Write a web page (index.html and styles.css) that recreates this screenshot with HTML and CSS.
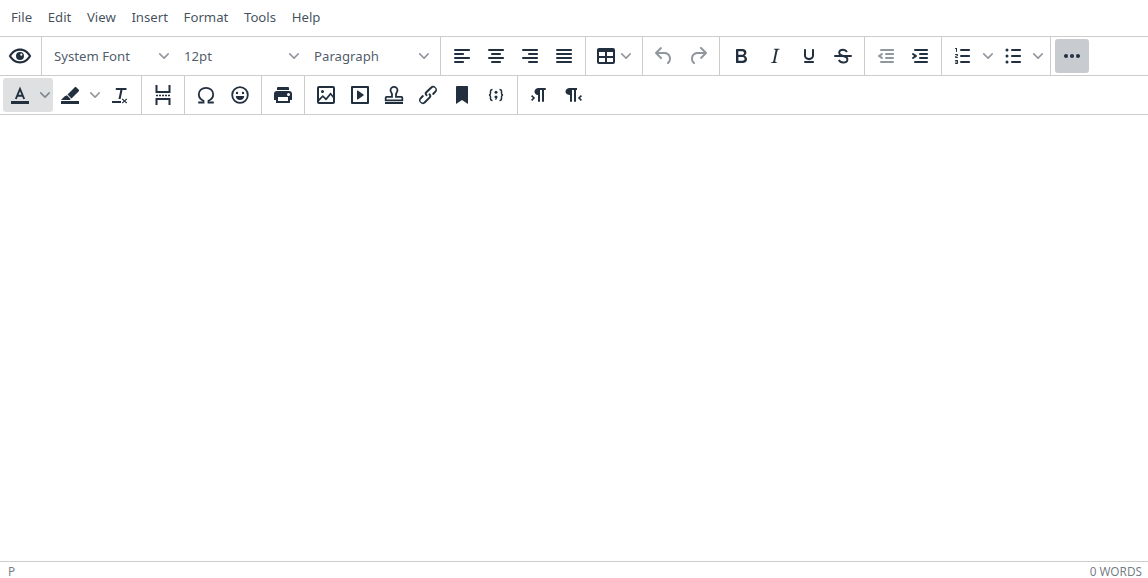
FILE: index.html
```html
<!DOCTYPE html>
<html lang="en">
<head>
    <meta charset="UTF-8">
    <meta name="viewport" content="width=device-width, initial-scale=1.0">
    <title>Editor</title>
    <link rel="stylesheet" href="styles.css">
</head>
<body>
    <svg class="sprite" xmlns="http://www.w3.org/2000/svg">
        <symbol id="i-chevron" viewBox="0 0 10 10"><path d="M8.7 2.2c.3-.3.8-.3 1 0 .4.4.4.9 0 1.2L5.7 7.8c-.3.3-.9.3-1.2 0L.2 3.4a.8.8 0 010-1.2c.3-.3.8-.3 1.1 0L5 6l3.7-3.8z"/></symbol>
        <symbol id="i-preview" viewBox="0 0 24 24"><path fill-rule="evenodd" d="M12 4.600c4.500 0 8.300 2.600 10.800 6.700l.4.700-.4.700c-2.500 4.100-6.300 6.700-10.800 6.700S3.700 16.800 1.200 12.700L.8 12l.4-.7C3.700 7.200 7.500 4.600 12 4.600zm0 2.100c-3.500 0-6.600 1.900-8.800 5.300 2.200 3.400 5.300 5.300 8.800 5.300s6.600-1.900 8.800-5.300c-2.200-3.400-5.300-5.300-8.800-5.300zm0 1.300a4 4 0 110 8 4 4 0 010-8zm1.300 1.600a1.100 1.100 0 100 2.200 1.100 1.100 0 000-2.200z"/></symbol>
        <symbol id="i-align-left" viewBox="0 0 24 24"><path d="M5 5h14c.6 0 1 .4 1 1s-.4 1-1 1H5a1 1 0 110-2zm0 4h8c.6 0 1 .4 1 1s-.4 1-1 1H5a1 1 0 110-2zm0 8h8c.6 0 1 .4 1 1s-.4 1-1 1H5a1 1 0 010-2zm0-4h14c.6 0 1 .4 1 1s-.4 1-1 1H5a1 1 0 010-2z"/></symbol>
        <symbol id="i-align-center" viewBox="0 0 24 24"><path d="M5 5h14c.6 0 1 .4 1 1s-.4 1-1 1H5a1 1 0 110-2zm3 4h8c.6 0 1 .4 1 1s-.4 1-1 1H8a1 1 0 110-2zm0 8h8c.6 0 1 .4 1 1s-.4 1-1 1H8a1 1 0 010-2zm-3-4h14c.6 0 1 .4 1 1s-.4 1-1 1H5a1 1 0 010-2z"/></symbol>
        <symbol id="i-align-right" viewBox="0 0 24 24"><path d="M5 5h14c.6 0 1 .4 1 1s-.4 1-1 1H5a1 1 0 110-2zm6 4h8c.6 0 1 .4 1 1s-.4 1-1 1h-8a1 1 0 010-2zm0 8h8c.6 0 1 .4 1 1s-.4 1-1 1h-8a1 1 0 010-2zm-6-4h14c.6 0 1 .4 1 1s-.4 1-1 1H5a1 1 0 010-2z"/></symbol>
        <symbol id="i-align-justify" viewBox="0 0 24 24"><path d="M5 5h14c.6 0 1 .4 1 1s-.4 1-1 1H5a1 1 0 110-2zm0 4h14c.6 0 1 .4 1 1s-.4 1-1 1H5a1 1 0 110-2zm0 4h14c.6 0 1 .4 1 1s-.4 1-1 1H5a1 1 0 010-2zm0 4h14c.6 0 1 .4 1 1s-.4 1-1 1H5a1 1 0 010-2z"/></symbol>
        <symbol id="i-table" viewBox="0 0 24 24"><path fill-rule="evenodd" d="M19 4a2 2 0 012 2v12a2 2 0 01-2 2H5a2 2 0 01-2-2V6c0-1.100.9-2 2-2h14zM5 14v4h6v-4H5zm14 0h-6v4h6v-4zm0-6h-6v4h6V8zM5 12h6V8H5v4z"/></symbol>
        <symbol id="i-undo" viewBox="0 0 24 24"><path d="M6.400 8H12c3.700 0 6.200 2 6.800 5.100.6 2.700-.4 5.600-2.300 6.800a1 1 0 01-1-1.800c1.100-.7 1.800-2.700 1.400-4.600-.5-2.100-2.100-3.500-4.900-3.500H6.400l3.300 3.300a1 1 0 11-1.400 1.400l-5-5a1 1 0 010-1.400l5-5a1 1 0 011.400 1.400L6.400 8z"/></symbol>
        <symbol id="i-redo" viewBox="0 0 24 24"><path d="M17.600 10H12c-2.800 0-4.400 1.400-4.900 3.500-.4 2 .3 4 1.400 4.600a1 1 0 11-1 1.800c-2-1.200-2.900-4.100-2.300-6.800.6-3 3-5.100 6.800-5.100h5.600l-3.300-3.300a1 1 0 111.400-1.400l5 5a1 1 0 010 1.400l-5 5a1 1 0 01-1.400-1.400l3.300-3.300z"/></symbol>
        <symbol id="i-bold" viewBox="0 0 24 24"><path d="M7.800 19c-.3 0-.5 0-.6-.2l-.2-.5V5.700c0-.2 0-.4.2-.5l.6-.2h5c1.500 0 2.700.3 3.500 1 .7.6 1.100 1.400 1.100 2.500a3 3 0 01-.6 1.900c-.4.6-1 1-1.600 1.200.4.1.9.3 1.300.6s.8.7 1 1.200c.4.4.5 1 .5 1.600 0 1.300-.4 2.300-1.300 3-.8.7-2.100 1-3.800 1H7.800zm5-8.300c.6 0 1.200-.1 1.600-.5.4-.3.6-.7.6-1.300 0-1.100-.8-1.700-2.300-1.700H9.300v3.500h3.500zm.5 6c.7 0 1.300-.1 1.700-.4.4-.4.6-.9.6-1.500s-.2-1-.7-1.400c-.4-.3-1-.4-2-.4H9.400v3.700h3.900z"/></symbol>
        <symbol id="i-italic" viewBox="0 0 24 24"><path d="M16.700 4.700l-.1.900h-.3c-.6 0-1 0-1.400.3-.3.3-.4.6-.5 1.100l-2.100 9.800v.6c0 .5.4.8 1.400.8h.2l-.2.800H8l.2-.8h.2c1.100 0 1.800-.5 2-1.500l2-9.800.1-.5c0-.6-.4-.8-1.400-.8h-.3l.2-.9h5.700z"/></symbol>
        <symbol id="i-underline" viewBox="0 0 24 24"><path d="M16 5c.6 0 1 .4 1 1v5.500a4 4 0 01-.4 1.800l-1 1.400a5.300 5.300 0 01-5.500 1 5 5 0 01-1.600-1c-.5-.4-.8-.9-1.100-1.400a4 4 0 01-.4-1.800V6c0-.6.4-1 1-1s1 .4 1 1v5.500c0 .3 0 .6.2 1l.6.7a3.300 3.300 0 002.200.8 3.400 3.400 0 002.200-.8c.3-.2.4-.5.6-.8l.2-.9V6c0-.6.4-1 1-1zM8 17h8c.6 0 1 .4 1 1s-.4 1-1 1H8a1 1 0 010-2z"/></symbol>
        <symbol id="i-strike" viewBox="0 0 24 24"><path d="M4 11h16a1 1 0 010 2H4a1 1 0 010-2z"/><path class="line" stroke-width="1.900" d="M16 8c-.7-1.300-2-2.300-3.900-2.300-2.500 0-3.900 1.500-3.900 3.100 0 2 2 2.700 3.900 3.200 2.300.5 4.300 1.300 4.300 3.400 0 1.900-1.800 3.100-4.200 3.100-2 0-3.600-1-4.400-2.500"/></symbol>
        <symbol id="i-outdent" viewBox="0 0 24 24"><path d="M7 5h12c.6 0 1 .4 1 1s-.4 1-1 1H7a1 1 0 110-2zm5 4h7c.6 0 1 .4 1 1s-.4 1-1 1h-7a1 1 0 010-2zm0 4h7c.6 0 1 .4 1 1s-.4 1-1 1h-7a1 1 0 010-2zm-5 4h12a1 1 0 010 2H7a1 1 0 010-2zm1.600-3.800a1 1 0 01-1.200 1.600l-3-2a1 1 0 010-1.600l3-2a1 1 0 011.200 1.600L6.800 12l1.800 1.200z"/></symbol>
        <symbol id="i-indent" viewBox="0 0 24 24"><path d="M7 5h12c.6 0 1 .4 1 1s-.4 1-1 1H7a1 1 0 110-2zm5 4h7c.6 0 1 .4 1 1s-.4 1-1 1h-7a1 1 0 010-2zm0 4h7c.6 0 1 .4 1 1s-.4 1-1 1h-7a1 1 0 010-2zm-5 4h12a1 1 0 010 2H7a1 1 0 010-2zm-2.600-3.800L6.200 12l-1.800-1.200a1 1 0 011.200-1.600l3 2a1 1 0 010 1.600l-3 2a1 1 0 11-1.200-1.600z"/></symbol>
        <symbol id="i-numlist" viewBox="0 0 24 24"><path d="M10 17h8c.6 0 1 .4 1 1s-.4 1-1 1h-8a1 1 0 010-2zm0-6h8c.6 0 1 .4 1 1s-.4 1-1 1h-8a1 1 0 010-2zm0-6h8c.6 0 1 .4 1 1s-.4 1-1 1h-8a1 1 0 110-2zM6 4v3.500c0 .3-.2.5-.5.5a.5.5 0 01-.5-.5V5h-.5a.5.5 0 010-1H6zm-1 8.800l.2.2h1.300c.3 0 .5.2.5.5s-.2.5-.5.5H4.900a1 1 0 01-.9-1V13c0-.4.3-.8.6-1l1.200-.4.2-.3a.2.2 0 00-.2-.2H4.500a.5.5 0 01-.5-.5c0-.3.2-.5.5-.5h1.600c.5 0 .9.4.9 1v.1c0 .4-.3.8-.6 1l-1.200.4-.2.200zM7 17v2c0 .6-.4 1-1 1H4.500a.5.5 0 010-1h1.200c.2 0 .3-.1.3-.3 0-.2-.1-.3-.3-.3H4.400a.4.4 0 110-.8h1.300c.2 0 .3-.1.3-.3 0-.2-.1-.3-.3-.3H4.500a.5.5 0 110-1H6c.6 0 1 .4 1 1z"/></symbol>
        <symbol id="i-bullist" viewBox="0 0 24 24"><path d="M11 5h8c.6 0 1 .4 1 1s-.4 1-1 1h-8a1 1 0 010-2zm0 6h8c.6 0 1 .4 1 1s-.4 1-1 1h-8a1 1 0 010-2zm0 6h8c.6 0 1 .4 1 1s-.4 1-1 1h-8a1 1 0 010-2z"/><circle cx="6" cy="6" r="1.500"/><circle cx="6" cy="12" r="1.500"/><circle cx="6" cy="18" r="1.500"/></symbol>
        <symbol id="i-more" viewBox="0 0 24 24"><circle cx="6" cy="12" r="2"/><circle cx="12" cy="12" r="2"/><circle cx="18" cy="12" r="2"/></symbol>
        <symbol id="i-forecolor" viewBox="0 0 24 24"><path class="line" stroke-width="1.900" d="M7.800 16l4.200-10 4.200 10M9.300 12.800h5.400"/><path d="M3 18h18v3H3z"/></symbol>
        <symbol id="i-highlight" viewBox="0 0 24 24"><path d="M3 18h18v3H3z"/><path d="M16.800 4.200a1 1 0 011.400 0l2.600 2.600a1 1 0 010 1.400l-7.300 7.300-4-4zM8.900 12.300l3.800 3.800-.9.900H3l3.400-3.400z"/></symbol>
        <symbol id="i-removeformat" viewBox="0 0 24 24"><path d="M8 5h10.500v2h-4L12.600 16h-2.100l1.900-9H7.600zM4 18h9v2H4zM14.600 15.600l1.900 1.600 1.800-1.600.8.800-1.800 1.600 1.800 1.600-.8.800-1.800-1.600-1.900 1.600-.7-.8 1.800-1.600-1.800-1.600z"/></symbol>
        <symbol id="i-pagebreak" viewBox="0 0 24 24"><path class="line" stroke-width="2" d="M5.500 2v7h13V2M5.500 22v-6h13v6"/><path d="M5 11.800h2v1.400H5zm3 0h2v1.400H8zm3 0h2v1.400h-2zm3 0h2v1.400h-2zm3 0h2v1.400h-2z"/></symbol>
        <symbol id="i-charmap" viewBox="0 0 24 24"><path class="line" stroke-width="1.800" d="M4.200 19.500h5.300v-1.700C6.500 16.400 4.800 14 4.800 11.200 4.800 7.400 8 4.900 12 4.900s7.200 2.500 7.200 6.300c0 2.800-1.700 5.200-4.700 6.600v1.700h5.300"/></symbol>
        <symbol id="i-emoji" viewBox="0 0 24 24"><circle class="line" stroke-width="1.800" cx="12" cy="12" r="7.800"/><circle cx="9" cy="10" r="1.200"/><circle cx="15" cy="10" r="1.200"/><path d="M7.800 13h8.400c0 2.400-1.900 4-4.200 4s-4.200-1.600-4.200-4z"/></symbol>
        <symbol id="i-print" viewBox="0 0 24 24"><path fill-rule="evenodd" d="M18 8H6a3 3 0 00-3 3v6h2v3h14v-3h2v-6a3 3 0 00-3-3zm-1 10H7v-4h10v4zm.5-5a1.500 1.500 0 110-3 1.500 1.500 0 010 3zM18 5a1 1 0 00-1-1H7a1 1 0 00-1 1v2h12V5z"/></symbol>
        <symbol id="i-image" viewBox="0 0 24 24"><path fill-rule="evenodd" d="M5 15.700l3.300-3.200c.3-.3.700-.3 1 0L12 15l4.100-5c.3-.4.800-.4 1 0l1.900 2.600V5H5v10.700zM5 18.300V19h14v-3.900l-2.400-3-4 4.900c-.3.400-.8.400-1.100 0l-2.700-2.700L5 18.300zM19 3a2 2 0 012 2v14a2 2 0 01-2 2H5a2 2 0 01-2-2V5c0-1.100.9-2 2-2h14zM8.500 7a1.500 1.500 0 110 3 1.500 1.500 0 010-3z"/></symbol>
        <symbol id="i-media" viewBox="0 0 24 24"><path fill-rule="evenodd" d="M4 3h16a1 1 0 011 1v16a1 1 0 01-1 1H4a1 1 0 01-1-1V4a1 1 0 011-1zm1 2v14h14V5H5zm4.800 2.600l5.700 4a.5.500 0 010 .8l-5.700 4a.5.500 0 01-.8-.4V8c0-.4.500-.6.800-.4z"/></symbol>
        <symbol id="i-template" viewBox="0 0 24 24"><path class="line" stroke-width="1.800" d="M12 3.800a3.500 3.500 0 00-3.500 3.500c0 1.700 1.500 2.500 1.500 4.200v2.400H4.500a.8.8 0 00-.8.800v2.600h16.600v-2.600a.8.8 0 00-.8-.8H14v-2.400c0-1.700 1.500-2.500 1.500-4.200A3.500 3.500 0 0012 3.800z"/><path d="M3 19h18v2H3z"/></symbol>
        <symbol id="i-link" viewBox="0 0 24 24"><path d="M6.200 12.300a1 1 0 011.400 1.400l-2 2a2 2 0 102.600 2.800l4.800-4.800a1 1 0 000-1.400 1 1 0 111.400-1.300 2.900 2.900 0 010 4L9.600 20a3.900 3.900 0 01-5.500-5.500l2-2.200zm11.600-.6a1 1 0 01-1.400-1.400l2-2a2 2 0 10-2.600-2.800L11 9.900a1 1 0 000 1.400 1 1 0 11-1.400 1.300 2.900 2.900 0 010-4L14.400 4a3.900 3.900 0 015.500 5.500l-2.100 2.200z"/></symbol>
        <symbol id="i-bookmark" viewBox="0 0 24 24"><path d="M6 4v17l6-4 6 4V4c0-.6-.4-1-1-1H7a1 1 0 00-1 1z"/></symbol>
        <symbol id="i-code" viewBox="0 0 24 24"><path class="line" stroke-width="1.500" d="M8.500 6.500c-1.500 0-2 .6-2 2v1.700c0 1-.5 1.700-1.500 1.800 1 .1 1.500.8 1.500 1.800v1.700c0 1.400.5 2 2 2M15.500 6.500c1.500 0 2 .6 2 2v1.700c0 1 .5 1.700 1.500 1.800-1 .1-1.500.8-1.500 1.800v1.700c0 1.400-.5 2-2 2"/><circle cx="12" cy="9.300" r="1.500"/><path d="M10.600 12.800h2.800v2l-1.400 2.200-.9-.5.5-1.500h-1z"/></symbol>
        <symbol id="i-ltr" viewBox="0 0 24 24"><path d="M11 5h7a1 1 0 010 2h-1v11a1 1 0 01-2 0V7h-2v11a1 1 0 01-2 0v-6c-.5 0-1 0-1.400-.3A3.400 3.400 0 017.800 10a3.300 3.300 0 010-2.800 3.400 3.400 0 011.800-1.800L11 5z"/><path class="line" stroke-width="1.600" d="M4.600 12.600L7 15l-2.400 2.400"/></symbol>
        <symbol id="i-rtl" viewBox="0 0 24 24"><path d="M8 5h8v2h-1v11a1 1 0 01-2 0V7h-2v11a1 1 0 01-2 0v-6c-.5 0-1 0-1.400-.3A3.400 3.400 0 014.800 10a3.300 3.300 0 010-2.800 3.400 3.400 0 011.800-1.800L8 5z"/><path class="line" stroke-width="1.600" d="M20.400 12.600L18 15l2.400 2.400"/></symbol>
    </svg>

    <div class="editor">
        <div class="menubar">
            <button class="menu-item">File</button>
            <button class="menu-item">Edit</button>
            <button class="menu-item">View</button>
            <button class="menu-item">Insert</button>
            <button class="menu-item">Format</button>
            <button class="menu-item">Tools</button>
            <button class="menu-item">Help</button>
        </div>

        <div class="toolbar">
            <div class="group first">
                <button class="btn"><svg class="icon"><use href="#i-preview"/></svg></button>
            </div>
            <div class="group">
                <button class="select"><span class="select-label">System Font</span><svg class="chevron"><use href="#i-chevron"/></svg></button>
                <button class="select"><span class="select-label">12pt</span><svg class="chevron"><use href="#i-chevron"/></svg></button>
                <button class="select"><span class="select-label">Paragraph</span><svg class="chevron"><use href="#i-chevron"/></svg></button>
            </div>
            <div class="group">
                <button class="btn"><svg class="icon"><use href="#i-align-left"/></svg></button>
                <button class="btn"><svg class="icon"><use href="#i-align-center"/></svg></button>
                <button class="btn"><svg class="icon"><use href="#i-align-right"/></svg></button>
                <button class="btn"><svg class="icon"><use href="#i-align-justify"/></svg></button>
            </div>
            <div class="group">
                <button class="menu-btn"><svg class="icon"><use href="#i-table"/></svg><span class="caret"><svg class="chevron"><use href="#i-chevron"/></svg></span></button>
            </div>
            <div class="group">
                <button class="btn disabled"><svg class="icon"><use href="#i-undo"/></svg></button>
                <button class="btn disabled"><svg class="icon"><use href="#i-redo"/></svg></button>
            </div>
            <div class="group">
                <button class="btn"><svg class="icon"><use href="#i-bold"/></svg></button>
                <button class="btn"><svg class="icon"><use href="#i-italic"/></svg></button>
                <button class="btn"><svg class="icon"><use href="#i-underline"/></svg></button>
                <button class="btn"><svg class="icon"><use href="#i-strike"/></svg></button>
            </div>
            <div class="group">
                <button class="btn disabled"><svg class="icon"><use href="#i-outdent"/></svg></button>
                <button class="btn"><svg class="icon"><use href="#i-indent"/></svg></button>
            </div>
            <div class="group">
                <div class="split">
                    <button class="btn"><svg class="icon"><use href="#i-numlist"/></svg></button>
                    <span class="caret"><svg class="chevron"><use href="#i-chevron"/></svg></span>
                </div>
                <div class="split">
                    <button class="btn"><svg class="icon"><use href="#i-bullist"/></svg></button>
                    <span class="caret"><svg class="chevron"><use href="#i-chevron"/></svg></span>
                </div>
            </div>
            <div class="group">
                <button class="btn active"><svg class="icon"><use href="#i-more"/></svg></button>
            </div>
        </div>

        <div class="toolbar">
            <div class="group first">
                <div class="split hover">
                    <button class="btn"><svg class="icon"><use href="#i-forecolor"/></svg></button>
                    <span class="caret"><svg class="chevron"><use href="#i-chevron"/></svg></span>
                </div>
                <div class="split">
                    <button class="btn"><svg class="icon"><use href="#i-highlight"/></svg></button>
                    <span class="caret"><svg class="chevron"><use href="#i-chevron"/></svg></span>
                </div>
                <button class="btn"><svg class="icon"><use href="#i-removeformat"/></svg></button>
            </div>
            <div class="group">
                <button class="btn"><svg class="icon"><use href="#i-pagebreak"/></svg></button>
            </div>
            <div class="group">
                <button class="btn"><svg class="icon"><use href="#i-charmap"/></svg></button>
                <button class="btn"><svg class="icon"><use href="#i-emoji"/></svg></button>
            </div>
            <div class="group">
                <button class="btn"><svg class="icon"><use href="#i-print"/></svg></button>
            </div>
            <div class="group">
                <button class="btn"><svg class="icon"><use href="#i-image"/></svg></button>
                <button class="btn"><svg class="icon"><use href="#i-media"/></svg></button>
                <button class="btn"><svg class="icon"><use href="#i-template"/></svg></button>
                <button class="btn"><svg class="icon"><use href="#i-link"/></svg></button>
                <button class="btn"><svg class="icon"><use href="#i-bookmark"/></svg></button>
                <button class="btn"><svg class="icon"><use href="#i-code"/></svg></button>
            </div>
            <div class="group">
                <button class="btn"><svg class="icon"><use href="#i-ltr"/></svg></button>
                <button class="btn"><svg class="icon"><use href="#i-rtl"/></svg></button>
            </div>
        </div>

        <div class="content"></div>

        <div class="statusbar">
            <span>P</span>
            <span>0 words</span>
        </div>
    </div>
</body>
</html>
```

FILE: styles.css
```css
* {
    margin: 0;
    padding: 0;
    box-sizing: border-box;
}

body {
    font-family: "Noto Sans", "Open Sans", sans-serif;
    color: #222f3e;
    background-color: #fff;
}

button {
    font: inherit;
    color: inherit;
    background: none;
    border: 0;
}

.sprite {
    display: none;
}

.editor {
    height: 100vh;
    display: flex;
    flex-direction: column;
}

.menubar {
    height: 37px;
    padding: 0 0 2px 3px;
    display: flex;
    align-items: center;
    border-bottom: 1px solid #ccc;
}

.menu-item {
    height: 30px;
    padding: 0 8px;
    margin-right: -0.4px;
    font-size: 13.2px;
    color: rgba(34, 47, 62, 0.85);
}

.toolbar {
    height: 39px;
    display: flex;
    border-bottom: 1px solid #ccc;
}

.group {
    display: flex;
    align-items: center;
    padding: 0 4px;
    border-left: 1px solid #ccc;
}

.group.first {
    padding-left: 3px;
    border-left: 0;
}

.btn {
    width: 34px;
    height: 34px;
    display: flex;
    align-items: center;
    justify-content: center;
    border-radius: 3px;
}

.btn.active {
    background-color: #c8cbcf;
}

.btn.disabled .icon {
    fill: rgba(34, 47, 62, 0.5);
}

.icon {
    width: 24px;
    height: 24px;
    fill: #222f3e;
}

.line {
    fill: none;
    stroke: #222f3e;
}

.chevron {
    width: 10px;
    height: 10px;
    fill: rgba(34, 47, 62, 0.5);
}

.caret {
    width: 16px;
    height: 34px;
    display: flex;
    align-items: center;
    justify-content: center;
}

.split {
    display: flex;
    border-radius: 3px;
}

.split.hover {
    background-color: #dee0e2;
}

.menu-btn {
    width: 48px;
    height: 34px;
    padding: 0 4px;
    display: flex;
    align-items: center;
}

.select {
    width: 130px;
    height: 34px;
    padding: 0 4px;
    display: flex;
    align-items: center;
    font-size: 13.2px;
    color: rgba(34, 47, 62, 0.8);
}

.select-label {
    flex: 1;
    margin: 0 4px;
    text-align: left;
}

.select .chevron {
    margin: 0 3px;
}

.content {
    flex: 1;
}

.statusbar {
    height: 17px;
    padding: 1px 6px 0 8px;
    display: flex;
    align-items: center;
    justify-content: space-between;
    border-top: 1px solid #ccc;
    font-size: 11.8px;
    text-transform: uppercase;
    color: rgba(34, 47, 62, 0.65);
}
```
